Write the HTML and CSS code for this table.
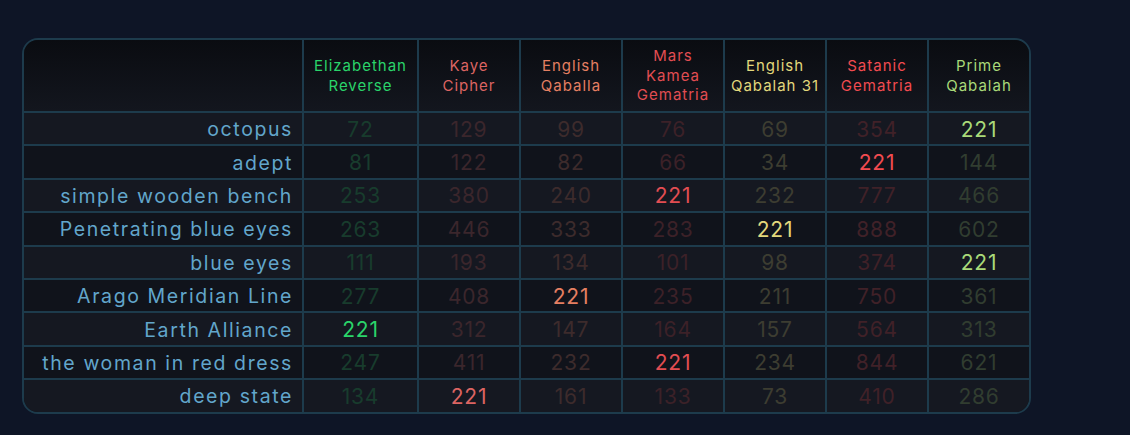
FILE: index.html
```html
<!DOCTYPE html>
<html lang="en">
<head>
<meta charset="utf-8">
<title>Gematria table</title>
<link rel="stylesheet" href="styles.css">
</head>
<body>
<div class="wrap">
  <table class="gtable">
    <colgroup>
      <col class="c-label">
      <col class="c-first">
      <col class="c-num"><col class="c-num"><col class="c-num"><col class="c-num"><col class="c-num"><col class="c-last">
    </colgroup>
    <thead>
      <tr>
        <th class="corner"></th>
        <th class="k-er">Elizabethan<br>Reverse</th>
        <th class="k-kc">Kaye<br>Cipher</th>
        <th class="k-eq">English<br>Qaballa</th>
        <th class="k-mk">Mars<br>Kamea<br>Gematria</th>
        <th class="k-e31">English<br>Qabalah 31</th>
        <th class="k-sg">Satanic<br>Gematria</th>
        <th class="k-pq">Prime<br>Qabalah</th>
      </tr>
    </thead>
    <tbody>
      <tr><td class="label">octopus</td><td class="k-er dim">72</td><td class="k-kc dim">129</td><td class="k-eq dim">99</td><td class="k-mk dim">76</td><td class="k-e31 dim">69</td><td class="k-sg dim">354</td><td class="k-pq">221</td></tr>
      <tr><td class="label">adept</td><td class="k-er dim">81</td><td class="k-kc dim">122</td><td class="k-eq dim">82</td><td class="k-mk dim">66</td><td class="k-e31 dim">34</td><td class="k-sg">221</td><td class="k-pq dim">144</td></tr>
      <tr><td class="label">simple wooden bench</td><td class="k-er dim">253</td><td class="k-kc dim">380</td><td class="k-eq dim">240</td><td class="k-mk">221</td><td class="k-e31 dim">232</td><td class="k-sg dim">777</td><td class="k-pq dim">466</td></tr>
      <tr><td class="label">Penetrating blue eyes</td><td class="k-er dim">263</td><td class="k-kc dim">446</td><td class="k-eq dim">333</td><td class="k-mk dim">283</td><td class="k-e31">221</td><td class="k-sg dim">888</td><td class="k-pq dim">602</td></tr>
      <tr><td class="label">blue eyes</td><td class="k-er dim">111</td><td class="k-kc dim">193</td><td class="k-eq dim">134</td><td class="k-mk dim">101</td><td class="k-e31 dim">98</td><td class="k-sg dim">374</td><td class="k-pq">221</td></tr>
      <tr><td class="label">Arago Meridian Line</td><td class="k-er dim">277</td><td class="k-kc dim">408</td><td class="k-eq">221</td><td class="k-mk dim">235</td><td class="k-e31 dim">211</td><td class="k-sg dim">750</td><td class="k-pq dim">361</td></tr>
      <tr><td class="label">Earth Alliance</td><td class="k-er">221</td><td class="k-kc dim">312</td><td class="k-eq dim">147</td><td class="k-mk dim">164</td><td class="k-e31 dim">157</td><td class="k-sg dim">564</td><td class="k-pq dim">313</td></tr>
      <tr><td class="label">the woman in red dress</td><td class="k-er dim">247</td><td class="k-kc dim">411</td><td class="k-eq dim">232</td><td class="k-mk">221</td><td class="k-e31 dim">234</td><td class="k-sg dim">844</td><td class="k-pq dim">621</td></tr>
      <tr><td class="label">deep state</td><td class="k-er dim">134</td><td class="k-kc">221</td><td class="k-eq dim">161</td><td class="k-mk dim">133</td><td class="k-e31 dim">73</td><td class="k-sg dim">410</td><td class="k-pq dim">286</td></tr>
    </tbody>
  </table>
</div>
</body>
</html>
```
FILE: styles.css
```css
html, body {
  margin: 0;
  padding: 0;
  background: #0e1526;
}
body {
  padding: 38px 0 0 22px;
  font-family: Inter, "Noto Sans", sans-serif;
}
.wrap {
  width: 1005px;
  border: 2px solid #1d3b4c;
  border-radius: 16px;
  overflow: hidden;
  background: #13161e;
}
.gtable {
  width: 100%;
  table-layout: fixed;
  border-collapse: separate;
  border-spacing: 0;
}
.c-label { width: 280px; }
.c-first { width: 115px; }
.c-num { width: 102px; }
.c-last { width: 100px; }

.gtable th,
.gtable td {
  padding: 0;
  text-align: center;
  border-right: 2px solid #1d3b4c;
  border-bottom: 2px solid #1d3b4c;
  color: var(--c);
}
.gtable th:last-child,
.gtable td:last-child { border-right: 0; }
.gtable tbody tr:last-child td { border-bottom: 0; }

.gtable thead th {
  height: 71px;
  font-size: 15px;
  font-weight: 400;
  letter-spacing: 1px;
  line-height: 19.5px;
  background: linear-gradient(#0a0c11, #13161e);
}
.gtable tbody td {
  height: 30.4px;
  padding-top: 1px;
  font-size: 21px;
  font-weight: 400;
  letter-spacing: 0.8px;
}
.gtable tbody tr:nth-child(odd) td { background: #151821; }
.gtable tbody tr:nth-child(even) td { background: #10131b; }

.gtable td.label {
  text-align: right;
  padding-right: 9px;
  color: #62a6cb;
  font-size: 19.5px;
  letter-spacing: 1.6px;
}

.k-er { --c: #2ad46a; }
.k-kc { --c: #dc6462; }
.k-eq { --c: #e57f62; }
.k-mk { --c: #e24d52; }
.k-e31 { --c: #e3d87c; }
.k-sg { --c: #f24b50; }
.k-pq { --c: #a9da79; }

.gtable td.dim { color: color-mix(in srgb, var(--c) 20%, #13161e); }
```
